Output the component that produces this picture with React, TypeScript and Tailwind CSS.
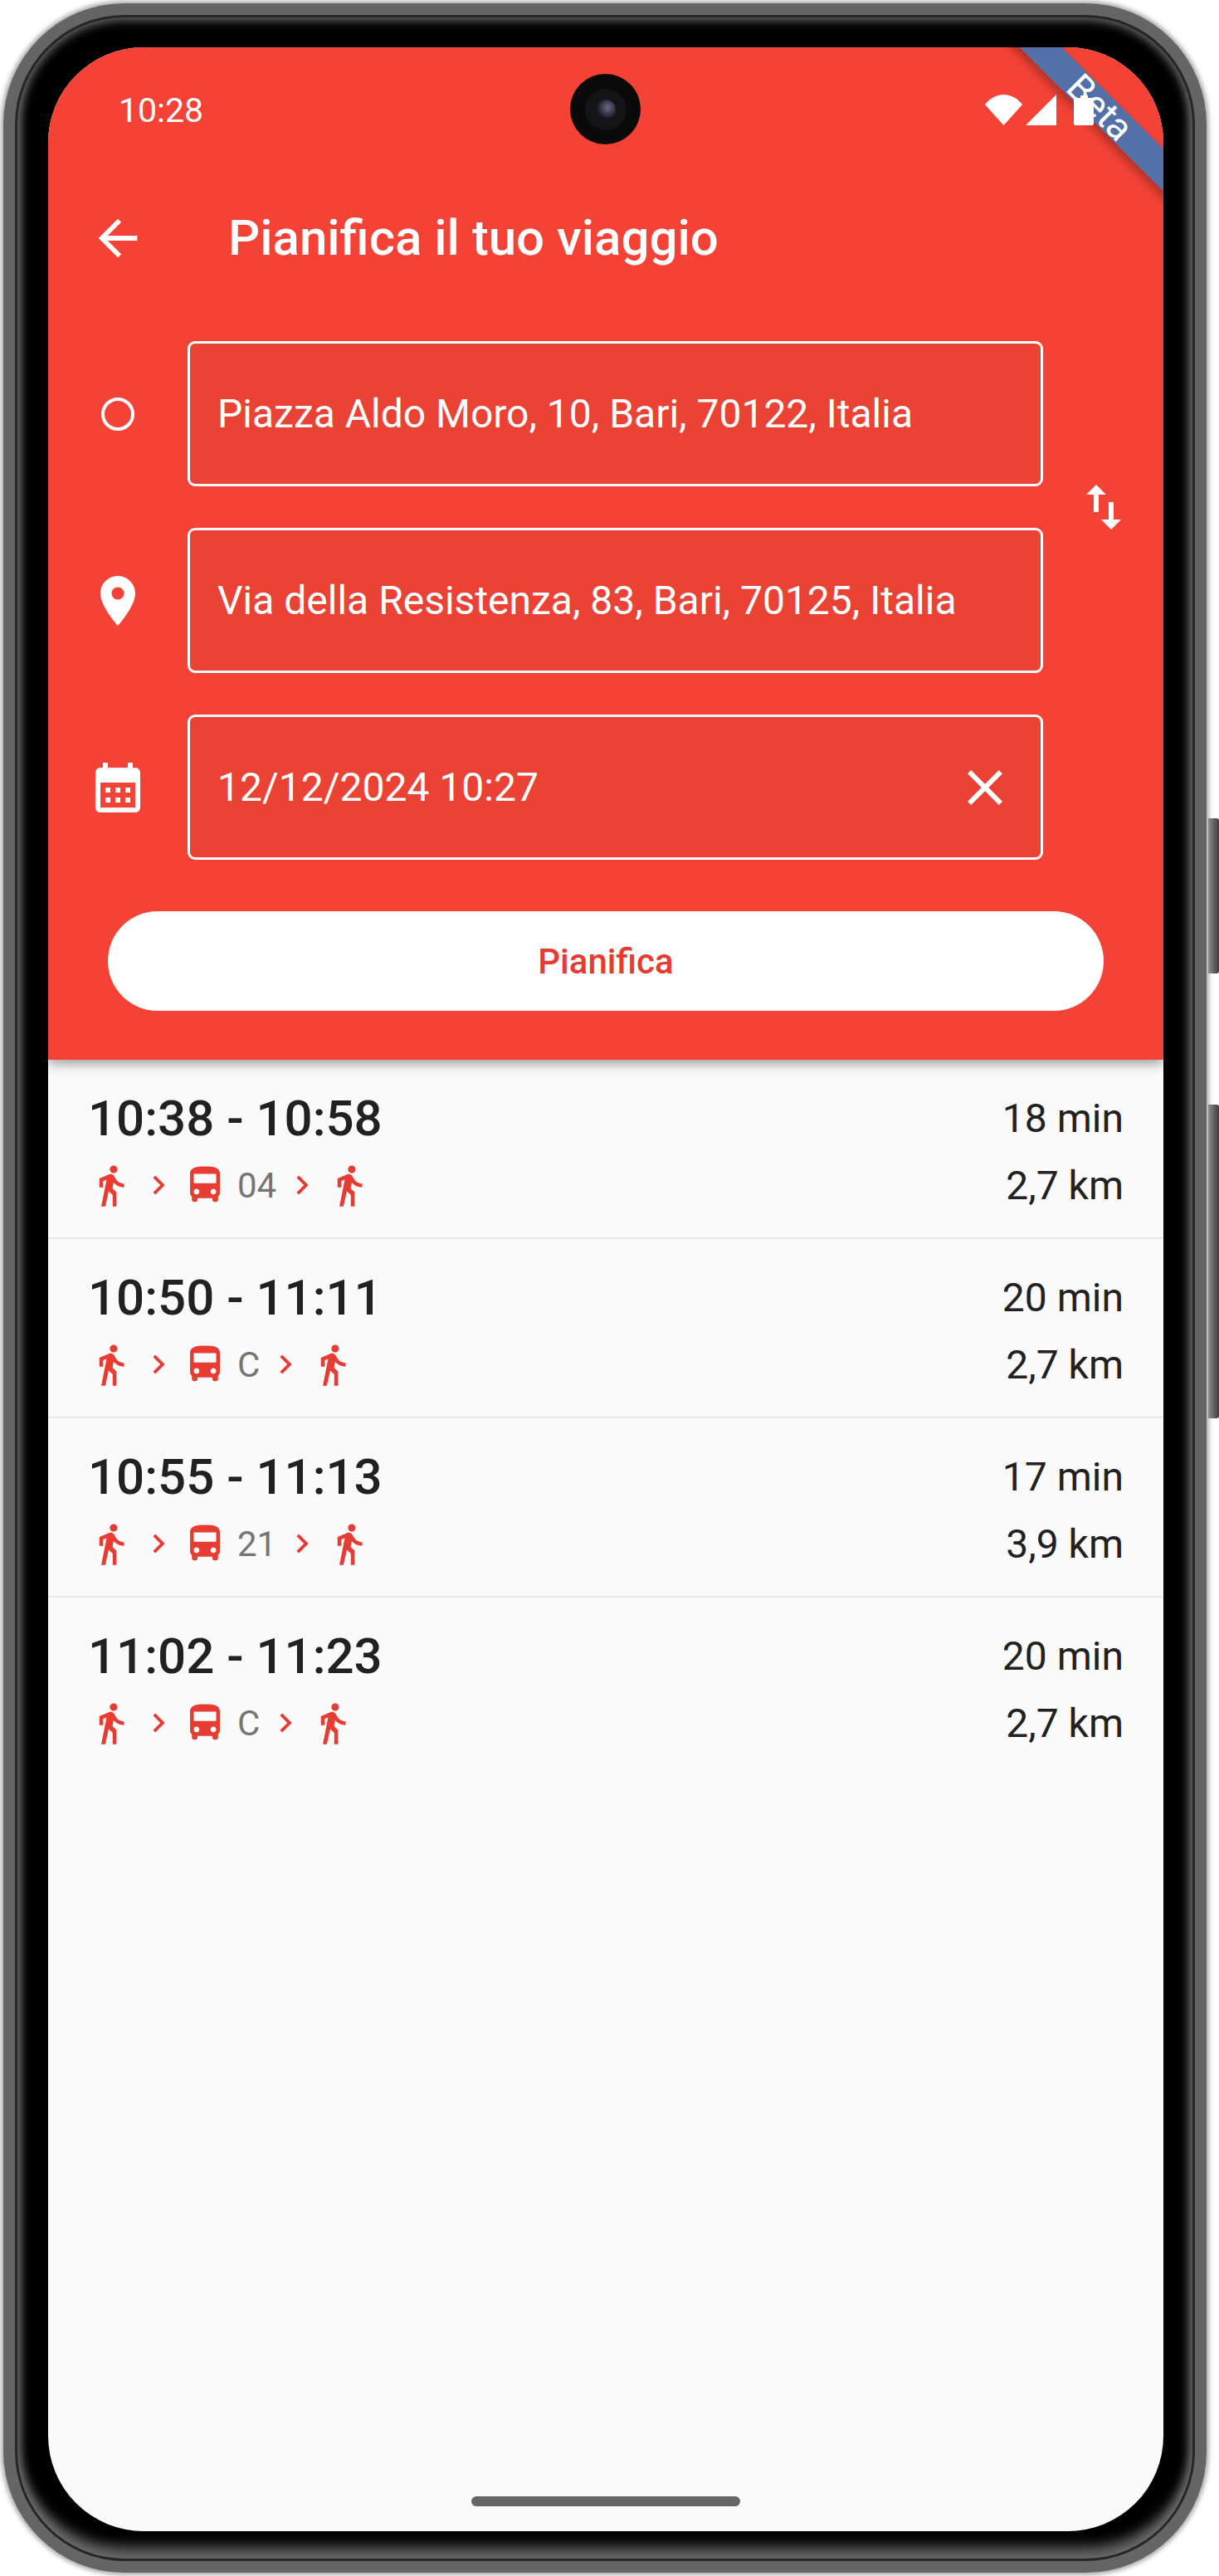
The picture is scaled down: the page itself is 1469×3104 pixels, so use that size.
import type { ReactNode } from "react";

// Material icon paths used across the screen
const WALK =
  "M13.5 5.5c1.1 0 2-.9 2-2s-.9-2-2-2-2 .9-2 2 .9 2 2 2zM9.8 8.9L7 23h2.1l1.8-8 2.1 2v6h2v-7.5l-2.1-2 .6-3C14.8 12 16.8 13 19 13v-2c-1.9 0-3.5-1-4.3-2.4l-1-1.6c-.4-.6-1-1-1.7-1-.3 0-.5.1-.8.1L6 8.3V13h2V9.6l1.8-.7";
const BUS =
  "M4 16c0 .88.39 1.67 1 2.22V20c0 .55.45 1 1 1h1c.55 0 1-.45 1-1v-1h8v1c0 .55.45 1 1 1h1c.55 0 1-.45 1-1v-1.78c.61-.55 1-1.34 1-2.22V6c0-3.5-3.58-4-8-4s-8 .5-8 4v10zm3.5 1c-.83 0-1.5-.67-1.5-1.5S6.67 14 7.5 14s1.5.67 1.5 1.5S8.33 17 7.5 17zm9 0c-.83 0-1.5-.67-1.5-1.5s.67-1.5 1.5-1.5 1.5.67 1.5 1.5-.67 1.5-1.5 1.5zm1.5-6H6V6h12v5z";
const CHEVRON = "M10 6L8.59 7.41 13.17 12l-4.58 4.59L10 18l6-6z";
const BACK = "M20 11H7.83l5.59-5.59L12 4l-8 8 8 8 1.41-1.41L7.83 13H20v-2z";
const PIN =
  "M12 2C8.13 2 5 5.13 5 9c0 5.25 7 13 7 13s7-7.75 7-13c0-3.87-3.13-7-7-7zm0 9.5c-1.38 0-2.5-1.12-2.5-2.5s1.12-2.5 2.5-2.5 2.5 1.12 2.5 2.5-1.12 2.5-2.5 2.5z";
const CALENDAR =
  "M19 4h-1V2h-2v2H8V2H6v2H5c-1.1 0-1.99.9-1.99 2L3 20c0 1.1.89 2 2 2h14c1.1 0 2-.9 2-2V6c0-1.1-.9-2-2-2zm0 16H5V10h14v10zM7 12h2v2H7zm4 0h2v2h-2zm4 0h2v2h-2zm-8 4h2v2H7zm4 0h2v2h-2zm4 0h2v2h-2z";
const SWAP = "M16 17.01V10h-2v7.01h-3L15 21l4-3.99h-3zM9 3L5 6.99h3V14h2V6.99h3L9 3z";
const CLOSE = "M19 6.41L17.59 5 12 10.59 6.41 5 5 6.41 10.59 12 5 17.59 6.41 19 12 13.41 17.59 19 19 17.59 13.41 12z";

function Icon({ d, className }: { d: string; className: string }) {
  return (
    <svg viewBox="0 0 24 24" fill="currentColor" className={className}>
      <path d={d} />
    </svg>
  );
}

const viaggi = [
  { orario: "10:38 - 10:58", linea: "04", durata: "18 min", km: "2,7 km" },
  { orario: "10:50 - 11:11", linea: "C", durata: "20 min", km: "2,7 km" },
  { orario: "10:55 - 11:13", linea: "21", durata: "17 min", km: "3,9 km" },
  { orario: "11:02 - 11:23", linea: "C", durata: "20 min", km: "2,7 km" },
];

function Campo({ icona, testo, azione }: { icona: ReactNode; testo: string; azione?: ReactNode }) {
  return (
    <div className="flex items-center">
      <div className="flex w-[168px] shrink-0 items-center justify-center">{icona}</div>
      <div className="flex h-[175px] w-[1031px] items-center justify-between rounded-[9px] border-[3px] border-white bg-[#ea4335] pl-[33px] pr-[33px]">
        <span className="text-[48px] text-white">{testo}</span>
        {azione}
      </div>
    </div>
  );
}

function Riga({ v, ultima }: { v: (typeof viaggi)[number]; ultima: boolean }) {
  return (
    <div className={`flex h-[216px] items-start justify-between pl-[48px] pr-[48px] pt-[41px] ${ultima ? "" : "border-b-2 border-[#e9e9e9]"}`}>
      <div>
        <div className="h-[60px] text-[60px] font-medium leading-[60px] text-[#212121]">{v.orario}</div>
        <div className="mt-[22px] flex h-[56px] items-center text-[#e63c33]">
          <Icon d={WALK} className="h-[55px] w-[55px] shrink-0" />
          <Icon d={CHEVRON} className="ml-[7px] h-[46px] w-[46px] shrink-0" />
          <Icon d={BUS} className="ml-[6px] h-[54px] w-[54px] shrink-0" />
          <span className="ml-[12px] text-[42px] text-[#757575]">{v.linea}</span>
          <Icon d={CHEVRON} className="ml-[8px] h-[46px] w-[46px] shrink-0" />
          <Icon d={WALK} className="ml-[6px] h-[55px] w-[55px] shrink-0" />
        </div>
      </div>
      <div className="flex flex-col items-end text-[48px] text-[#212121]">
        <div className="h-[59px] leading-[59px]">{v.durata}</div>
        <div className="mt-[24px] h-[56px] leading-[56px]">{v.km}</div>
      </div>
    </div>
  );
}

export default function App() {
  return (
    <div className="relative h-[3104px] w-[1469px] overflow-hidden bg-white font-['Roboto',sans-serif]">
      {/* tasti laterali */}
      <div className="absolute left-[1456px] top-[986px] h-[187px] w-[13px] rounded-r-[3px] bg-gradient-to-r from-[#8f8f8f] to-[#3d3d3d]" />
      <div className="absolute left-[1456px] top-[1331px] h-[378px] w-[13px] rounded-r-[3px] bg-gradient-to-r from-[#8f8f8f] to-[#3d3d3d]" />

      {/* cornice del telefono */}
      <div className="relative h-[3104px] w-[1458px] rounded-[150px] p-[4px]">
        <div className="h-full w-full rounded-[146px] bg-[#656565] p-[14px] shadow-[0_0_5px_3px_rgba(130,130,130,0.65)]">
          <div className="h-full w-full rounded-[132px] bg-[#262626] p-[3px]">
            <div className="h-full w-full rounded-[129px] bg-black pb-[33px] pl-[37px] pr-[35px] pt-[36px] shadow-[inset_0_0_12px_3px_#707070,inset_0_-16px_14px_rgba(90,90,90,0.9)]">
              <div className="relative flex h-[2993px] w-[1344px] flex-col overflow-hidden rounded-[115px] bg-[#fafafa]">
                <div className="relative z-10 bg-[#f44336] shadow-[0_4px_14px_rgba(0,0,0,0.4)]">
                  {/* banner Beta */}
                  <div className="absolute left-[1068px] top-[54px] z-10 flex h-[36px] w-[400px] rotate-45 items-center justify-center bg-[#5470a8] text-[45px] leading-none text-white shadow-[0_6px_12px_rgba(0,0,0,0.3)]">
                    Beta
                  </div>

                  {/* status bar */}
                  <div className="flex h-[152px] items-center justify-between pl-[85px] pr-[84px]">
                    <span className="text-[41px] leading-none text-white">10:28</span>
                    <div className="relative z-20 mb-[2px] flex items-end">
                      <svg viewBox="0 0 45 37" className="h-[37px] w-[45px]" fill="white">
                        <path d="M0 12 C12 -4 33 -4 45 12 L22.5 37 Z" />
                      </svg>
                      <svg viewBox="0 0 37 37" className="ml-[4px] h-[37px] w-[37px]" fill="white">
                        <path d="M37 0 V37 H0 Z" />
                      </svg>
                      <div className="ml-[21px] flex flex-col items-center">
                        <div className="h-[3px] w-[9px] bg-white" />
                        <div className="h-[33px] w-[24px] rounded-[2px] bg-white" />
                      </div>
                    </div>
                  </div>

                  {/* app bar */}
                  <div className="flex h-[156px] items-center pl-[49px]">
                    <Icon d={BACK} className="h-[70px] w-[70px] text-white" />
                    <span className="ml-[98px] text-[60px] font-medium leading-none text-white">Pianifica il tuo viaggio</span>
                  </div>

                  {/* campi */}
                  <div className="mt-[46px] flex items-center">
                    <div className="flex flex-col gap-[50px]">
                      <Campo
                        testo="Piazza Aldo Moro, 10, Bari, 70122, Italia"
                        icona={<div className="h-[40px] w-[40px] rounded-full border-[4px] border-white" />}
                      />
                      <Campo testo="Via della Resistenza, 83, Bari, 70125, Italia" icona={<Icon d={PIN} className="h-[72px] w-[72px] text-white" />} />
                      <Campo
                        testo="12/12/2024 10:27"
                        icona={<Icon d={CALENDAR} className="h-[72px] w-[72px] text-white" />}
                        azione={<Icon d={CLOSE} className="-mr-[2px] h-[72px] w-[72px] text-white" />}
                      />
                    </div>
                    <div className="ml-[37px] -mt-[225px]">
                      <Icon d={SWAP} className="h-[72px] w-[72px] text-white" />
                    </div>
                  </div>

                  <div className="pb-[59px] pl-[72px] pr-[72px] pt-[62px]">
                    <div className="flex h-[120px] items-center justify-center rounded-full bg-white text-[42px] font-medium text-[#e63c33]">
                      Pianifica
                    </div>
                  </div>
                </div>

                {/* risultati */}
                <div className="flex-1">
                  {viaggi.map((v, i) => (
                    <Riga key={i} v={v} ultima={i === viaggi.length - 1} />
                  ))}
                </div>

                {/* fotocamera */}
                <div className="absolute left-[629px] top-[32px] z-20 flex h-[85px] w-[85px] items-center justify-center rounded-full bg-[#0a0a0a]">
                  <div className="h-[50px] w-[50px] rounded-full bg-[#141416]">
                    <div className="ml-[13px] mt-[13px] h-[24px] w-[24px] rounded-full bg-[radial-gradient(circle_at_60%_40%,#6a6a8a,#15151f_65%)]" />
                  </div>
                </div>

                {/* barra home */}
                <div className="absolute bottom-[30px] left-[510px] z-20 h-[12px] w-[324px] rounded-full bg-[#666666]" />
              </div>
            </div>
          </div>
        </div>
      </div>
    </div>
  );
}
